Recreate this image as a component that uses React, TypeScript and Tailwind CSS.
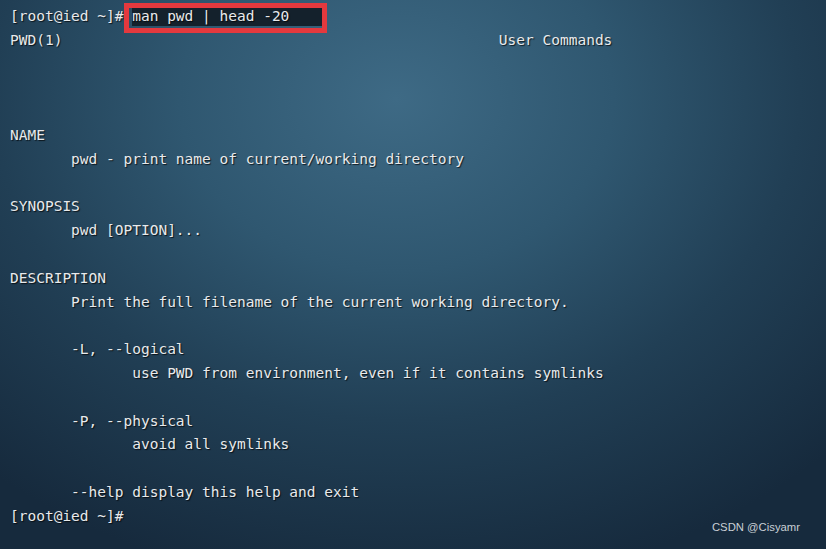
const lines: string[] = [
  "",
  "PWD(1)" + " ".repeat(50) + "User Commands",
  "",
  "",
  "",
  "NAME",
  "       pwd - print name of current/working directory",
  "",
  "SYNOPSIS",
  "       pwd [OPTION]...",
  "",
  "DESCRIPTION",
  "       Print the full filename of the current working directory.",
  "",
  "       -L, --logical",
  "              use PWD from environment, even if it contains symlinks",
  "",
  "       -P, --physical",
  "              avoid all symlinks",
  "",
  "       --help display this help and exit",
  "[root@ied ~]#",
];

export default function App() {
  return (
    <div className="relative w-[826px] h-[549px] overflow-hidden bg-[radial-gradient(ellipse_75%_90%_at_48%_18%,#3e6a85_0%,#2f5770_35%,#213f55_65%,#162a3d_100%)] pt-[5px] pl-[10px] font-['DejaVu_Sans_Mono',monospace] text-[14.5px] text-[#e8eaec] [text-shadow:1px_1px_1px_rgba(0,0,0,0.7)]">
      {lines.map((line, i) =>
        i === 0 ? (
          <div key={i} className="h-[23.8px] leading-[23.8px] whitespace-pre flex items-center">
            <span>{"[root@ied ~]# "}</span>
            <span className="bg-[#14212c] h-[19px] leading-[19px] whitespace-pre">
              {"man pwd | head -20    "}
            </span>
          </div>
        ) : (
          <div key={i} className="h-[23.8px] leading-[23.8px] whitespace-pre">
            {line}
          </div>
        )
      )}

      {/* red annotation box */}
      <div className="absolute left-[124px] top-[3px] w-[203px] h-[30px] border-[5px] border-[#e4393e]" />

      <div className="absolute right-[26px] bottom-[13px] font-['Liberation_Sans',sans-serif] text-[11.3px] text-[#c9cfd5] [text-shadow:none]">
        CSDN @Cisyamr
      </div>
    </div>
  );
}
